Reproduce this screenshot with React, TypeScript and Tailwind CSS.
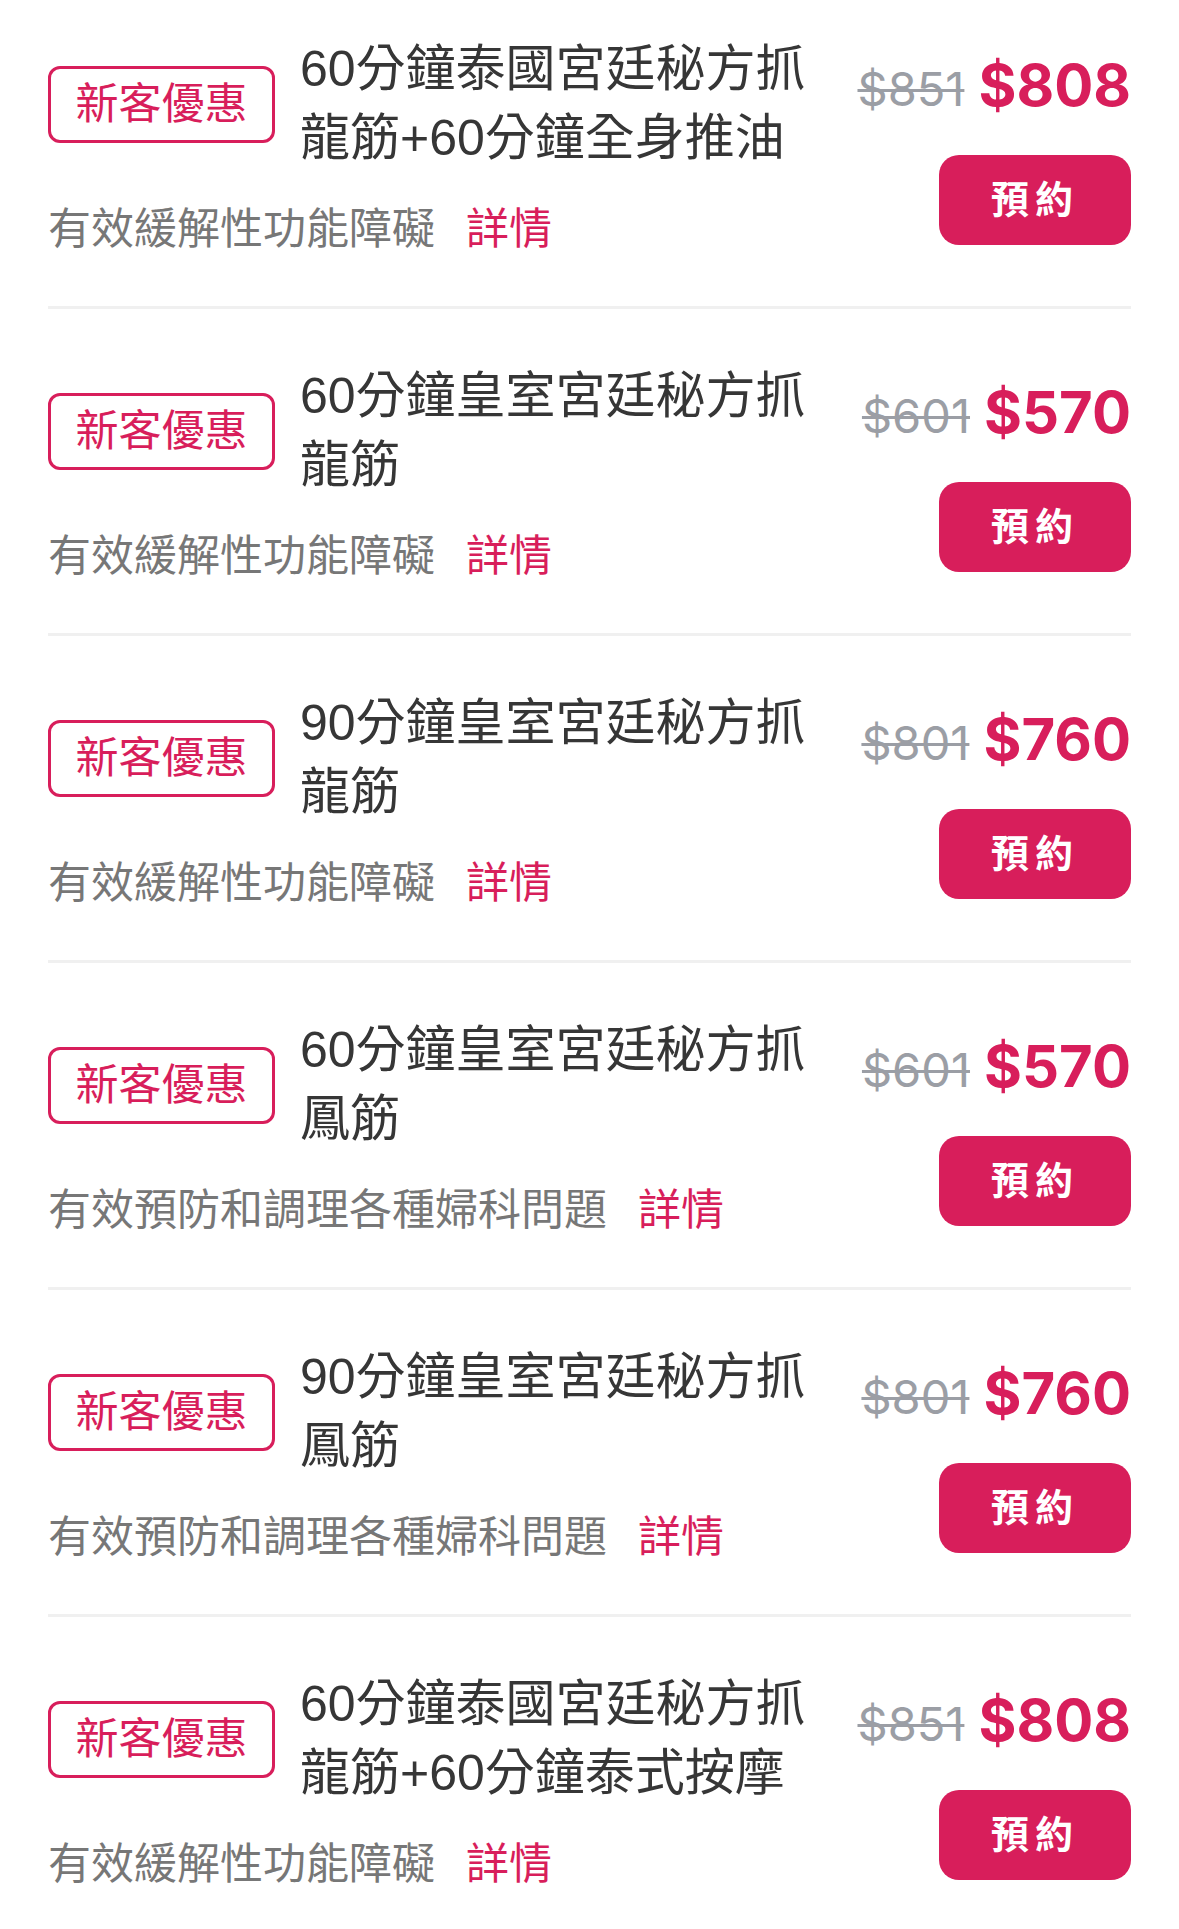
interface Offer {
  title: string;
  desc: string;
  oldPrice: string;
  price: string;
}

const OFFERS: Offer[] = [
  { title: '60分鐘泰國宮廷秘方抓龍筋+60分鐘全身推油', desc: '有效緩解性功能障礙', oldPrice: '$851', price: '$808' },
  { title: '60分鐘皇室宮廷秘方抓龍筋', desc: '有效緩解性功能障礙', oldPrice: '$601', price: '$570' },
  { title: '90分鐘皇室宮廷秘方抓龍筋', desc: '有效緩解性功能障礙', oldPrice: '$801', price: '$760' },
  { title: '60分鐘皇室宮廷秘方抓鳳筋', desc: '有效預防和調理各種婦科問題', oldPrice: '$601', price: '$570' },
  { title: '90分鐘皇室宮廷秘方抓鳳筋', desc: '有效預防和調理各種婦科問題', oldPrice: '$801', price: '$760' },
  { title: '60分鐘泰國宮廷秘方抓龍筋+60分鐘泰式按摩', desc: '有效緩解性功能障礙', oldPrice: '$851', price: '$808' },
];

function OfferRow({ offer }: { offer: Offer }) {
  return (
    <div className="flex items-center justify-between pt-[53px] first:pt-[35px] pb-[47px] border-b-[3px] border-[#f0f0f0]">
      <div className="flex flex-col">
        <div className="flex items-center gap-[25px]">
          <div className="w-[227px] h-[77px] flex items-center justify-center rounded-[12px] border-[3px] border-[#d81e5b] text-[#d81e5b] text-[43px] leading-none">
            新客優惠
          </div>
          <div className="w-[530px] text-[50px] leading-[69px] text-[#363636]">
            {offer.title}
          </div>
        </div>
        <div className="mt-[26px] flex text-[43px] leading-[60px]">
          <span className="text-[#777777]">{offer.desc}</span>
          <span className="ml-[31px] text-[#d81e5b]">詳情</span>
        </div>
      </div>

      <div className="mb-[4px] flex flex-col items-end">
        <div className="flex items-baseline leading-[80px] font-['Inter',sans-serif]">
          <span className="text-[47px] text-[#9b9ea5] line-through decoration-[3px]">{offer.oldPrice}</span>
          <span className="ml-[14px] text-[58px] font-bold text-[#d81e5b]">{offer.price}</span>
        </div>
        <button className="mt-[26px] w-[192px] h-[90px] rounded-[20px] bg-[#d81e5b] text-white text-[38px] font-bold tracking-[6px] leading-none">
          預約
        </button>
      </div>
    </div>
  );
}

export default function App() {
  return (
    <div className="h-screen overflow-hidden bg-white px-[48px] font-['Liberation_Sans','Noto_Sans_CJK_TC',sans-serif]">
      {OFFERS.map((offer, i) => (
        <OfferRow key={i} offer={offer} />
      ))}
    </div>
  );
}
